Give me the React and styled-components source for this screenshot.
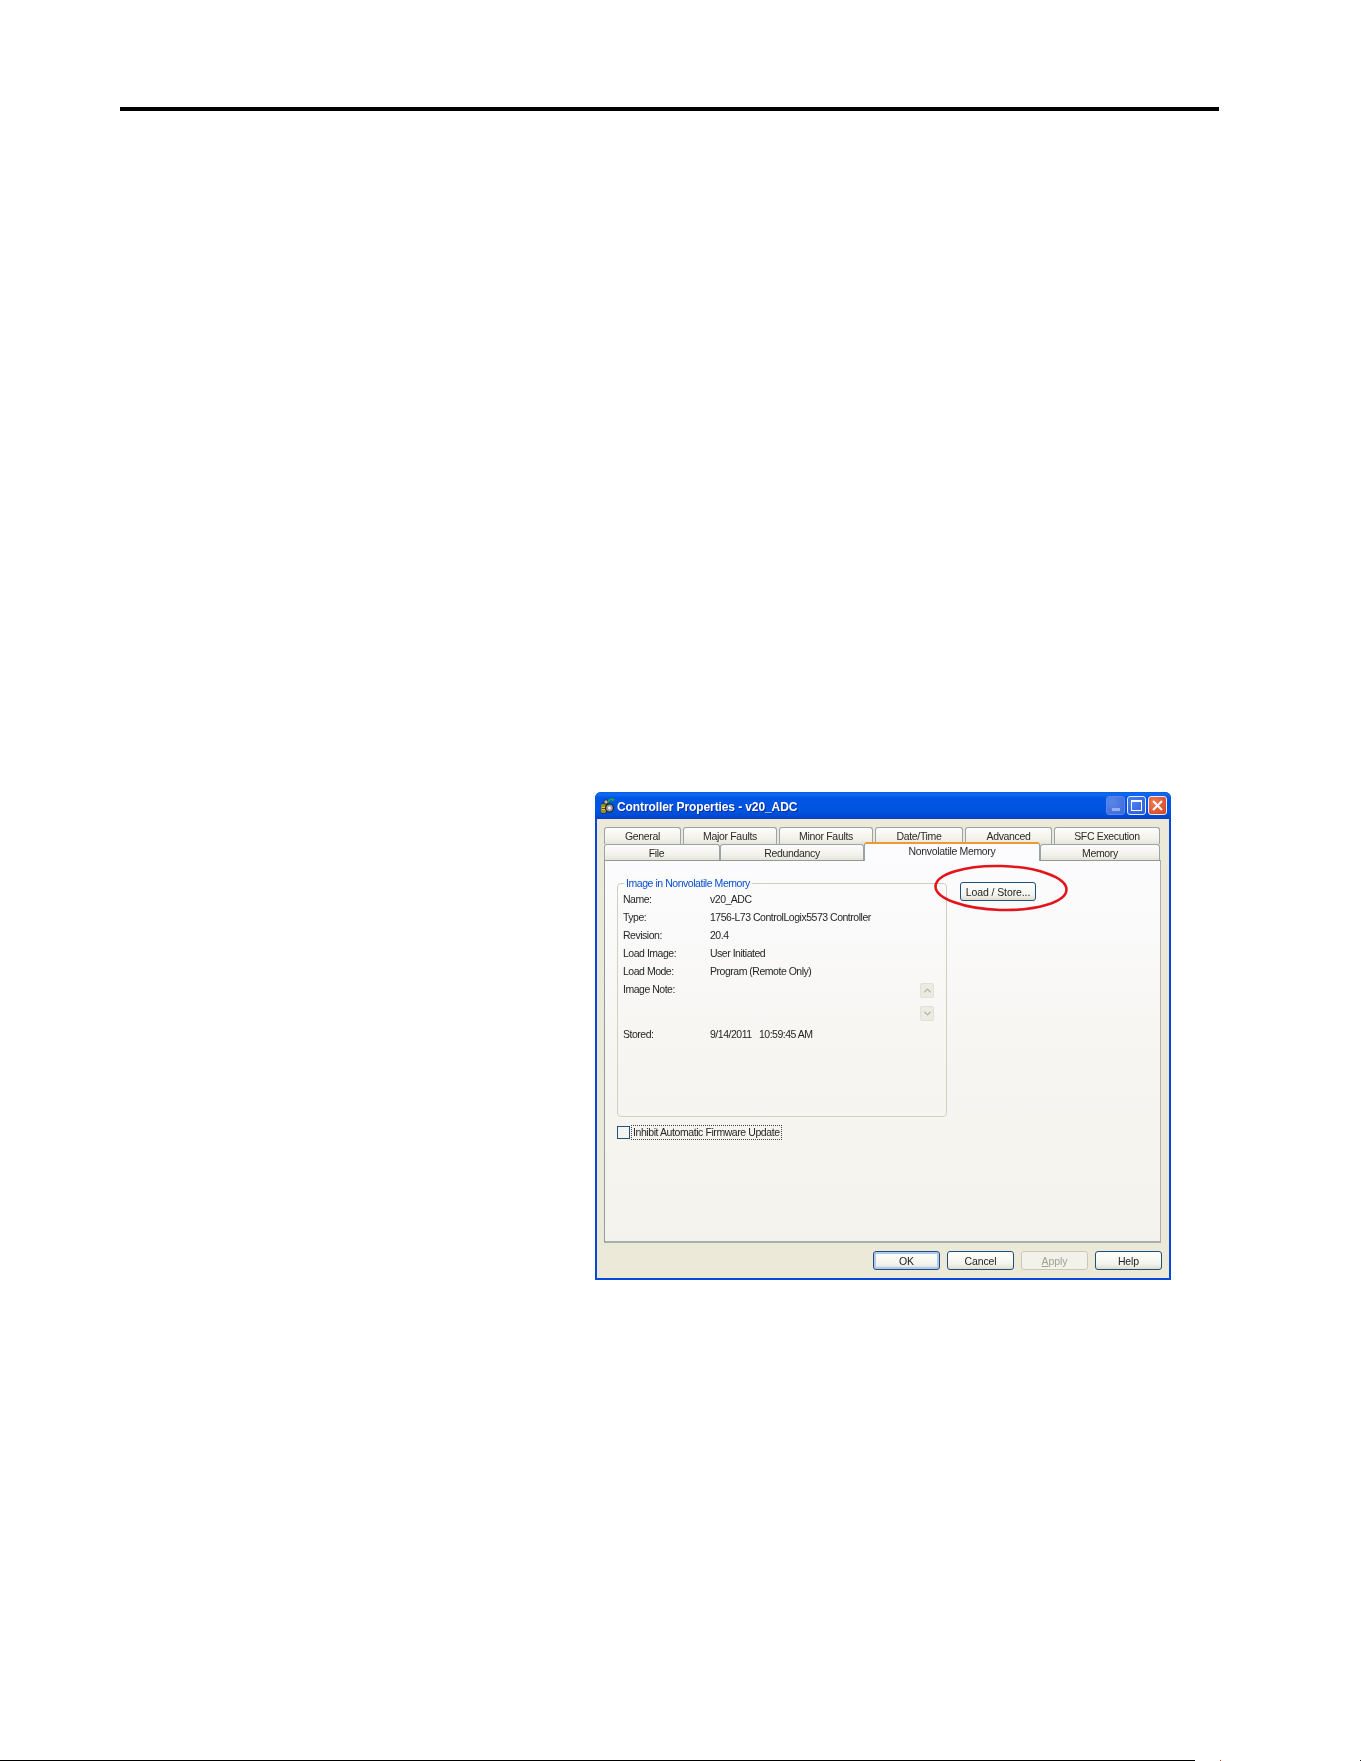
import React from "react"
import styled, { createGlobalStyle } from "styled-components"
import { ChevronUp, ChevronDown } from "lucide-react"

const GlobalStyle = createGlobalStyle`
  html, body {
    margin: 0;
    padding: 0;
    background: #fff;
  }
  * {
    box-sizing: border-box;
  }
`

const Page = styled.div`
  width: 1361px;
  height: 1761px;
  padding-top: 107px;
  display: flex;
  flex-direction: column;
  overflow: hidden;
  font-family: "Liberation Sans", Arial, sans-serif;
`

const TopRule = styled.div`
  height: 4px;
  width: 1099px;
  margin-left: 120px;
  background: #000;
`

const Window = styled.div`
  width: 576px;
  height: 488px;
  margin: 681px 0 0 595px;
  display: flex;
  flex-direction: column;
  background: #0a48dc;
  border-radius: 6px 6px 0 0;
  filter: blur(0.3px);
`

const TitleBar = styled.div`
  height: 27px;
  flex: none;
  display: flex;
  align-items: center;
  padding: 0 4px 0 6px;
  border-radius: 6px 6px 0 0;
  background: linear-gradient(
    #0a5ce0 0%,
    #0f6cf2 8%,
    #0056e4 22%,
    #0053e0 70%,
    #0049d2 90%,
    #0a3fc0 100%
  );
`

const TitleIcon = styled.svg`
  width: 14px;
  height: 16px;
  flex: none;
`

const TitleText = styled.span`
  margin: 2px 0 0 2px;
  flex: 1;
  color: #fff;
  font-size: 12px;
  font-weight: 700;
  letter-spacing: -0.1px;
  text-shadow: 1px 1px 0 #0a2f9c;
`

const WinButtons = styled.div`
  display: flex;
  gap: 2px;
`

const WinButton = styled.div`
  width: 19px;
  height: 19px;
  border: 1px solid ${({ $kind }) => ($kind === "min" ? "#5c86ec" : "#e8eefc")};
  border-radius: 3px;
  display: flex;
  align-items: center;
  justify-content: center;
  background: ${({ $kind }) =>
    $kind === "close"
      ? "radial-gradient(circle at 30% 30%, #ec7a55, #d8421c)"
      : $kind === "min"
      ? "radial-gradient(circle at 30% 30%, #5a86ea, #3c68d8)"
      : "radial-gradient(circle at 30% 30%, #4c80f0, #2c5ade)"};
`

const MinGlyph = styled.span`
  width: 8px;
  height: 3px;
  margin-top: 8px;
  background: #96aeee;
`

const MaxGlyph = styled.span`
  width: 11px;
  height: 11px;
  border: 1px solid #fff;
  border-top-width: 2px;
`

const Client = styled.div`
  flex: 1;
  margin: 0 2px 2px;
  padding: 8px 8px 7px 7px;
  display: flex;
  flex-direction: column;
  background: #ece9d8;
`

const TabRow = styled.div`
  height: ${({ $h }) => $h}px;
  flex: none;
  display: flex;
  gap: ${({ $gap }) => $gap}px;
`

const Tab = styled.div`
  width: ${({ $w }) => $w}px;
  flex: none;
  display: flex;
  align-items: center;
  justify-content: center;
  padding-right: ${({ $shift }) => $shift || 0}px;
  border: 1px solid #98a4a8;
  border-bottom: none;
  border-radius: 3px 3px 0 0;
  background: linear-gradient(#fdfdfb, #f2f1ea 70%, #e6e4d8);
  color: #2a2a2a;
  font-size: 10.5px;
  letter-spacing: -0.33px;
  white-space: nowrap;
`

const ActiveTab = styled(Tab)`
  height: 19px;
  margin-top: -2px;
  padding-bottom: 3px;
  position: relative;
  z-index: 1;
  border-top: 2px solid #eb9a34;
  background: #fcfcfe;
`

const Panel = styled.div`
  height: 383px;
  flex: none;
  padding: 22px 0 0 12px;
  position: relative;
  border: 1px solid #919b9c;
  border-right-color: #a9aeae;
  border-bottom: 2px solid #a9aeae;
  background: linear-gradient(#fcfcfe 0%, #f7f6f3 45%, #f3f2ec 100%);
`

const TopArea = styled.div`
  display: flex;
  align-items: flex-start;
`

const GroupBox = styled.div`
  width: 330px;
  height: 234px;
  flex: none;
  padding: 6px 12px 0 5px;
  position: relative;
  border: 1px solid #d0d0bf;
  border-radius: 4px;
`

const Legend = styled.span`
  position: absolute;
  top: -7px;
  left: 6px;
  padding: 0 2px;
  background: #fafaf8;
  color: #0a4fd0;
  font-size: 10.5px;
  line-height: 13px;
  letter-spacing: -0.45px;
`

const InfoGrid = styled.div`
  display: grid;
  grid-template-columns: 87px 1fr;
  font-size: 10.5px;
  letter-spacing: -0.48px;
  color: #262626;
`

const Cell = styled.div`
  height: ${({ $h }) => $h || 18}px;
  line-height: 18px;
  white-space: nowrap;
`

const SpinColumn = styled.div`
  height: 45px;
  display: flex;
  flex-direction: column;
  align-items: flex-end;
  gap: 8px;
  padding-top: 3px;
`

const SpinButton = styled.div`
  width: 14px;
  height: 15px;
  display: flex;
  align-items: center;
  justify-content: center;
  border: 1px solid #e2e1d6;
  border-radius: 2px;
  background: #ecebe2;
  color: #b4b4a4;
`

const Button = styled.div`
  width: ${({ $w }) => $w}px;
  height: 19px;
  flex: none;
  display: flex;
  align-items: center;
  justify-content: center;
  border: 1px solid ${({ $disabled }) => ($disabled ? "#c9c7ba" : "#1c4f7c")};
  border-radius: 3px;
  background: ${({ $disabled }) =>
    $disabled ? "#f3f2ea" : "linear-gradient(#fefefd, #f4f4ee 70%, #dfdccf)"};
  box-shadow: ${({ $def }) => ($def ? "inset 0 0 0 2px #b2c8ee" : "none")};
  color: ${({ $disabled }) => ($disabled ? "#a1a192" : "#222")};
  font-size: 10.5px;
  letter-spacing: -0.1px;
  u {
    text-underline-offset: 1px;
  }
`

const LoadButton = styled(Button)`
  margin: -1px 0 0 13px;
`

const CheckRow = styled.div`
  margin-top: 8px;
  display: flex;
  align-items: center;
`

const CheckBox = styled.span`
  width: 13px;
  height: 13px;
  flex: none;
  border: 1px solid #1c5180;
  background: #f4f3ee;
`

const CheckLabel = styled.span`
  margin-left: 1px;
  padding: 0 1px;
  border: 1px dotted #444;
  color: #262626;
  font-size: 10.5px;
  line-height: 13px;
  letter-spacing: -0.42px;
  white-space: nowrap;
`

const Ring = styled.svg`
  position: absolute;
  top: 4px;
  left: 331px;
  width: 136px;
  height: 50px;
  overflow: visible;
`

const Footer = styled.div`
  margin: 8px -1px 0 0;
  display: flex;
  justify-content: flex-end;
  gap: 7px;
`

const BottomRow = styled.div`
  margin-top: auto;
  height: 1px;
  display: flex;
  align-items: flex-start;
`

const BottomRule = styled.div`
  width: 1195px;
  height: 1px;
  background: #000;
`

const Speck = styled.div`
  width: 1px;
  height: 1px;
  margin-left: ${({ $x }) => $x}px;
  background: ${({ $c }) => $c};
`

const rows = [
  ["Name:", "v20_ADC"],
  ["Type:", "1756-L73 ControlLogix5573 Controller"],
  ["Revision:", "20.4"],
  ["Load Image:", "User Initiated"],
  ["Load Mode:", "Program (Remote Only)"]
]

const backTabs = [
  ["General", 77],
  ["Major Faults", 94],
  ["Minor Faults", 94],
  ["Date/Time", 88],
  ["Advanced", 87],
  ["SFC Execution", 106]
]

const AppIcon = () => (
  <TitleIcon viewBox="0 0 14 16">
    <rect x="0" y="6" width="5" height="9" fill="#f2d51e" stroke="#222" strokeWidth="0.8" />
    <path d="M1 8h3M1 10.500h3M1 13h3" stroke="#222" strokeWidth="0.8" />
    <circle cx="8.500" cy="10" r="4" fill="#9a9a9a" stroke="#222" strokeWidth="1.200" />
    <circle cx="8.500" cy="10" r="1.400" fill="#fff" />
    <circle cx="5" cy="4" r="2.200" fill="#bbb" stroke="#222" strokeWidth="0.900" />
    <path d="M7 4.500C7.500 2 9.500 1.200 11 1.500" fill="none" stroke="#22a838" strokeWidth="1.800" />
    <path d="M10.500 0L14 1.800 10.800 3.800z" fill="#22a838" />
  </TitleIcon>
)

const App = () => (
  <Page>
    <GlobalStyle />
    <TopRule />
    <Window>
      <TitleBar>
        <AppIcon />
        <TitleText>Controller Properties - v20_ADC</TitleText>
        <WinButtons>
          <WinButton $kind="min">
            <MinGlyph />
          </WinButton>
          <WinButton $kind="max">
            <MaxGlyph />
          </WinButton>
          <WinButton $kind="close">
            <svg width="11" height="11" viewBox="0 0 11 11">
              <path d="M1 1L10 10M10 1L1 10" stroke="#fff" strokeWidth="2" />
            </svg>
          </WinButton>
        </WinButtons>
      </TitleBar>
      <Client>
        <TabRow $h={17} $gap={2}>
          {backTabs.map(([label, w]) => (
            <Tab key={label} $w={w}>
              {label}
            </Tab>
          ))}
        </TabRow>
        <TabRow $h={16} $gap={0}>
          <Tab $w={116} $shift={11}>
            File
          </Tab>
          <Tab $w={144}>Redundancy</Tab>
          <ActiveTab $w={176}>Nonvolatile Memory</ActiveTab>
          <Tab $w={120}>Memory</Tab>
        </TabRow>
        <Panel>
          <TopArea>
            <GroupBox>
              <Legend>Image in Nonvolatile Memory</Legend>
              <InfoGrid>
                {rows.map(([label, value]) => (
                  <React.Fragment key={label}>
                    <Cell>{label}</Cell>
                    <Cell>{value}</Cell>
                  </React.Fragment>
                ))}
                <Cell $h={45}>Image Note:</Cell>
                <SpinColumn>
                  <SpinButton>
                    <ChevronUp size={11} strokeWidth={3} />
                  </SpinButton>
                  <SpinButton>
                    <ChevronDown size={11} strokeWidth={3} />
                  </SpinButton>
                </SpinColumn>
                <Cell>Stored:</Cell>
                <Cell>9/14/2011 &nbsp; 10:59:45 AM</Cell>
              </InfoGrid>
            </GroupBox>
            <LoadButton $w={76}>Load / Store...</LoadButton>
          </TopArea>
          <CheckRow>
            <CheckBox />
            <CheckLabel>Inhibit Automatic Firmware Update</CheckLabel>
          </CheckRow>
          <Ring viewBox="0 0 136 50">
            <ellipse
              cx="65"
              cy="23"
              rx="65.500"
              ry="22"
              fill="none"
              stroke="#e4141c"
              strokeWidth="2.600"
              transform="rotate(1.500 65 23)"
            />
          </Ring>
        </Panel>
        <Footer>
          <Button $w={67} $def>
            OK
          </Button>
          <Button $w={67}>Cancel</Button>
          <Button $w={67} $disabled>
            <span>
              <u>A</u>pply
            </span>
          </Button>
          <Button $w={67}>Help</Button>
        </Footer>
      </Client>
    </Window>
    <BottomRow>
      <BottomRule />
      <Speck $x={25} $c="#e2401c" />
      <Speck $x={139} $c="#222" />
    </BottomRow>
  </Page>
)

export default App
